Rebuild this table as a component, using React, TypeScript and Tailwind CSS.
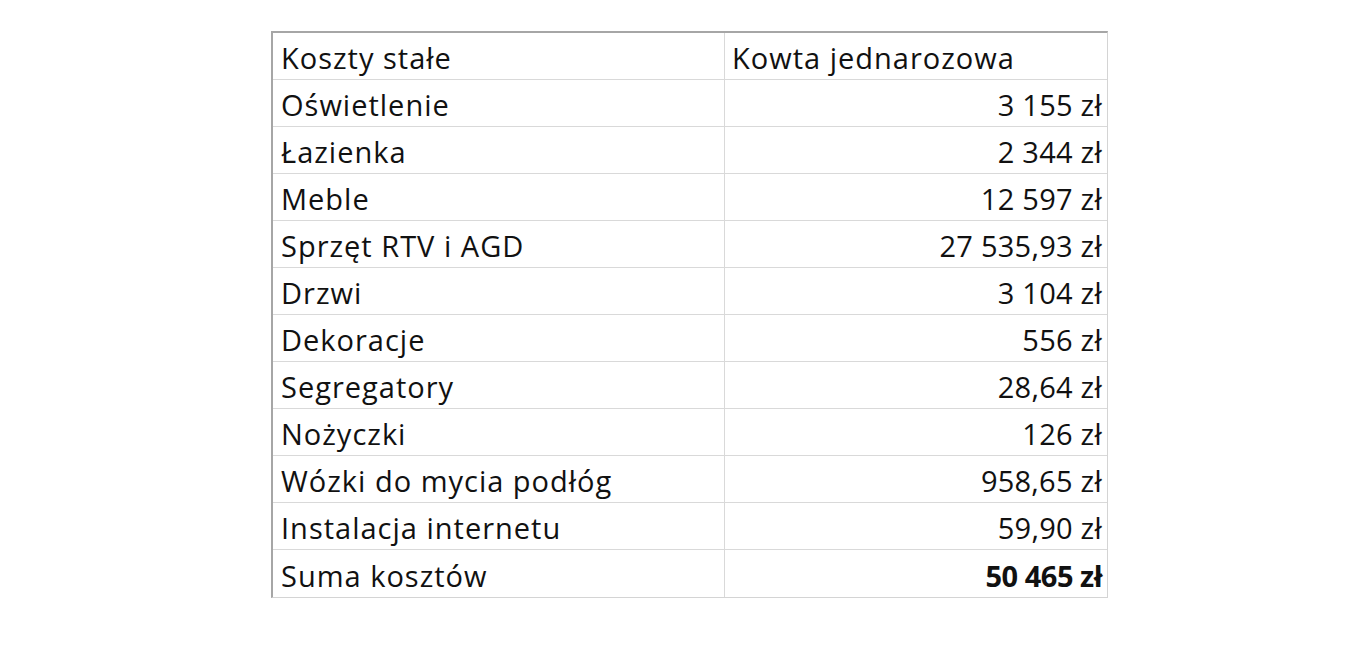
const ROWS: { label: string; value: string }[] = [
  { label: 'Oświetlenie', value: '3 155 zł' },
  { label: 'Łazienka', value: '2 344 zł' },
  { label: 'Meble', value: '12 597 zł' },
  { label: 'Sprzęt RTV i AGD', value: '27 535,93 zł' },
  { label: 'Drzwi', value: '3 104 zł' },
  { label: 'Dekoracje', value: '556 zł' },
  { label: 'Segregatory', value: '28,64 zł' },
  { label: 'Nożyczki', value: '126 zł' },
  { label: 'Wózki do mycia podłóg', value: '958,65 zł' },
  { label: 'Instalacja internetu', value: '59,90 zł' },
];

function Row({ label, value, bold, header }: { label: string; value: string; bold?: boolean; header?: boolean }) {
  return (
    <div className="grid grid-cols-[452px_383px] h-[47px] border-b border-[#d9d9d9] last:border-b-0">
      <div className="flex items-center pl-[8px] pt-[3px] border-r border-[#d9d9d9]">{label}</div>
      <div
        className={[
          'flex items-center pt-[3px]',
          header ? 'justify-start pl-[7px]' : 'justify-end pr-[6px] tracking-[0.25px]',
          bold ? 'font-bold !tracking-[-0.5px]' : '',
        ].join(' ')}
      >
        {value}
      </div>
    </div>
  );
}

export default function App() {
  return (
    <div className="min-h-screen bg-white pt-[31px] pl-[271px]">
      <div
        className="w-[837px] border-l-2 border-t-2 border-l-[#a6a6a6] border-t-[#a6a6a6] border-r border-b border-r-[#d4d4d4] border-b-[#d4d4d4] text-[29px] tracking-[1px] text-[#111] leading-none"
        style={{ fontFamily: '"Open Sans", Lato, sans-serif' }}
      >
        <Row label="Koszty stałe" value="Kowta jednarozowa" header />
        {ROWS.map((r) => (
          <Row key={r.label} label={r.label} value={r.value} />
        ))}
        <Row label="Suma kosztów" value="50 465 zł" bold />
      </div>
    </div>
  );
}
